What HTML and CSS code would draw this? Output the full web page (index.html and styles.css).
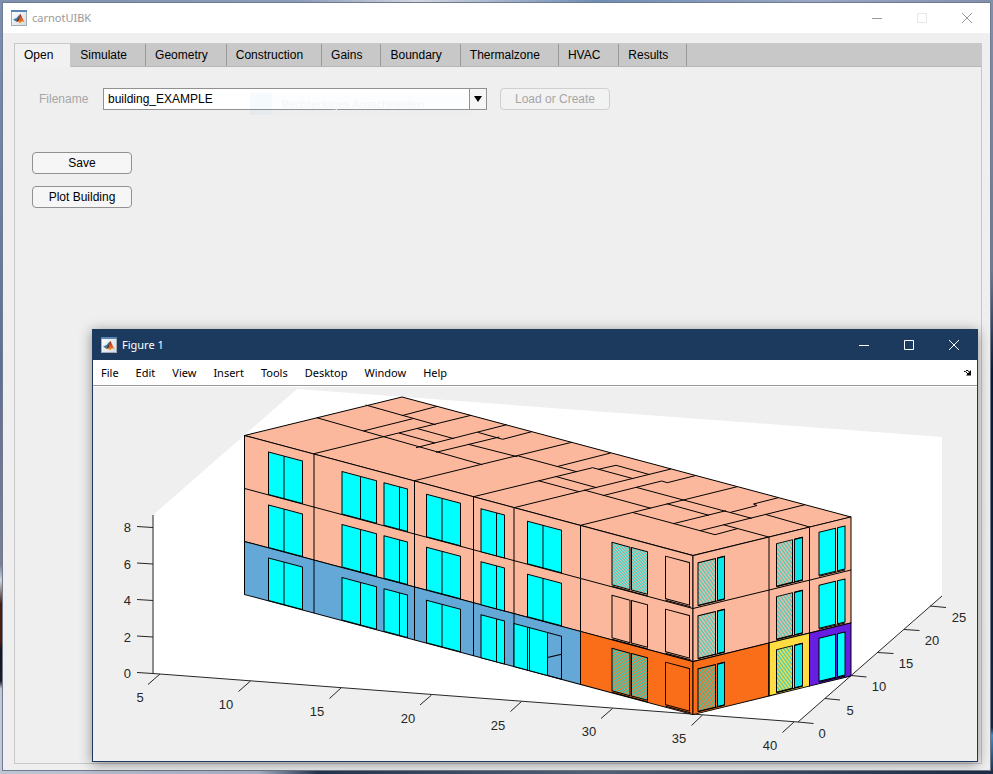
FILE: index.html
```
<!DOCTYPE html>
<html lang="en">
<head>
<meta charset="utf-8">
<title>carnotUIBK</title>
<link rel="stylesheet" href="styles.css">
</head>
<body>
<svg class="defs" aria-hidden="true">
  <defs>
    <linearGradient id="peak" x1="0" y1="0" x2="0" y2="1">
      <stop offset="0" stop-color="#8c2b14"/><stop offset=".5" stop-color="#e0551c"/><stop offset="1" stop-color="#f0a02c"/>
    </linearGradient>
    <linearGradient id="page" x1="0" y1="0" x2="1" y2="1">
      <stop offset="0" stop-color="#ffffff"/><stop offset="1" stop-color="#d3dae2"/>
    </linearGradient>
    <symbol id="matlab" viewBox="0 0 16 16">
      <rect x=".5" y=".5" width="15" height="15" fill="url(#page)" stroke="#a3adba"/>
      <rect x="0" y="0" width="16" height="2" fill="#5b86b3"/>
      <path d="M2 9.500 5.500 8 8.500 4.500 7.500 9 5 11.500Z" fill="#2f7fb5"/>
      <path d="M5 11.500 7.500 8 9 4C10 4 11.500 9 14 12.500 12 11 11 11 9 13.500 8 12 7 11.500 5 11.500Z" fill="url(#peak)"/>
      <path d="M5 11.500 7.500 8 8.500 4.500 8 10 6.500 11.500Z" fill="#5b2630"/>
    </symbol>
  </defs>
</svg>

<main class="window app">
  <header class="titlebar">
    <svg class="logo"><use href="#matlab"/></svg>
    <h1 class="title">carnotUIBK</h1>
    <div class="controls">
      <button type="button" aria-label="Minimize"><svg viewBox="0 0 10 10"><path d="M0 5.500H10"/></svg></button>
      <button type="button" aria-label="Maximize" disabled><svg viewBox="0 0 10 10"><path d="M.5.5h9v9h-9z"/></svg></button>
      <button type="button" aria-label="Close"><svg viewBox="0 0 10 10"><path d="M0 0 10 10M10 0 0 10"/></svg></button>
    </div>
  </header>
  <section class="panel">
    <nav class="tabs" role="tablist">
      <button type="button" role="tab" class="tab active" aria-selected="true">Open</button>
      <button type="button" role="tab" class="tab">Simulate</button>
      <button type="button" role="tab" class="tab">Geometry</button>
      <button type="button" role="tab" class="tab">Construction</button>
      <button type="button" role="tab" class="tab">Gains</button>
      <button type="button" role="tab" class="tab">Boundary</button>
      <button type="button" role="tab" class="tab">Thermalzone</button>
      <button type="button" role="tab" class="tab">HVAC</button>
      <button type="button" role="tab" class="tab">Results</button>
    </nav>
    <form class="form">
      <div class="file-row">
        <label for="filename">Filename</label>
        <div class="combo">
          <select id="filename"><option>building_EXAMPLE</option></select>
          <span class="arrow"></span>
          <div class="hint"><span class="hint-icon"></span>Rechteckiges Ausschneiden</div>
        </div>
        <button type="button" class="btn wide" disabled>Load or Create</button>
      </div>
      <div class="actions">
        <button type="button" class="btn">Save</button>
        <button type="button" class="btn">Plot Building</button>
      </div>
    </form>
  </section>
</main>

<section class="window figure">
  <header class="titlebar">
    <svg class="logo"><use href="#matlab"/></svg>
    <h2 class="title">Figure 1</h2>
    <div class="controls">
      <button type="button" aria-label="Minimize"><svg viewBox="0 0 10 10"><path d="M0 5.500H10"/></svg></button>
      <button type="button" aria-label="Maximize"><svg viewBox="0 0 10 10"><path d="M.5.5h9v9h-9z"/></svg></button>
      <button type="button" aria-label="Close"><svg viewBox="0 0 10 10"><path d="M0 0 10 10M10 0 0 10"/></svg></button>
    </div>
  </header>
  <nav class="menu">
    <button type="button">File</button>
    <button type="button">Edit</button>
    <button type="button">View</button>
    <button type="button">Insert</button>
    <button type="button">Tools</button>
    <button type="button">Desktop</button>
    <button type="button">Window</button>
    <button type="button">Help</button>
    <button type="button" class="dock" aria-label="Dock"><svg viewBox="0 0 8 6"><path d="M0 1.500h1.500l3 3M2 .5h2l2 2.500" fill="none" stroke="#000"/><path d="M7 0v5.500H2z"/></svg></button>
  </nav>
  <svg class="plot" viewBox="93 387 884 374" role="img" aria-label="3D building plot">
    <defs>
      <pattern id="hatch" width="4" height="2.500" patternUnits="userSpaceOnUse" patternTransform="rotate(58)">
        <rect width="4" height="1.100" fill="#2fd0c4"/>
      </pattern>
      <pattern id="hatch-dense" width="2.500" height="2.500" patternUnits="userSpaceOnUse" patternTransform="rotate(40)">
        <rect width="2.500" height="1.300" fill="#20dcd6"/>
      </pattern>
      <g id="front-windows" class="glass">
        <path d="M24 10h34v42.500h-34zM39.500 10v42.500"/>
        <path d="M97.500 10h34.500v42.500h-34.500zM116 10v42.500"/>
        <path d="M139.500 10h23.500v42.500h-23.500zM155 10v42.500"/>
        <path d="M182 10h34v42.500h-34zM197.500 10v42.500"/>
        <path d="M236.500 10h23.500v43h-23.500zM252 10v43"/>
      </g>
      <path id="front-f" class="glass" d="M283 10h34v42.500h-34zM298.500 10v42.500"/>
      <g id="front-g">
        <path d="M367.500 8.500h18v42.500h-18zM387 8.500h16v42.500h-16z"/>
        <path class="ledge" d="M367.500 52.500h36"/>
      </g>
      <g id="front-h" fill="none">
        <path d="M421 8h24v42.500h-24z"/>
        <path class="ledge" d="M421 52h25"/>
      </g>
      <g id="side-windows">
        <path d="M5 8.500h17.500v42.500h-17.500z" fill="url(#hatch)"/>
        <path class="glass" d="M24.500 8.500h7v42.500h-7z"/>
        <path class="veil" d="M24.500 8.500h7v42.500h-7z"/>
        <path d="M83.500 8.500h16v42.500h-16z" fill="url(#hatch)"/>
        <path class="glass" d="M101.500 8.500h8v42.500h-8z"/>
        <path class="veil" d="M101.500 8.500h8v42.500h-8z"/>
        <path class="glass" d="M126 7.500h16.500v43h-16.500zM144.500 7.500h7.500v43h-7.500z"/>
        <path class="ledge" d="M5 51.500h26.500M83.500 51.500h26M126 51.500h26" fill="none"/>
      </g>
    </defs>

    <path d="M297 389 942 437V597L797 722 153 674V515Z" fill="#fff"/>

    <g class="axes">
      <path class="z-axis" d="M153 515V674"/>
      <path d="M153 673.500 798 722 942 596"/>
      <path d="M137 526.500 153 527.500M137 563 153 564M137 599.500 153 600.500M137 636 153 637M137 672.500 153 673.500"/>
      <path d="M160 674 148 684.500M250.500 681 238.500 691.500M341 688 329.500 698.500M431.500 695 420 705M521.500 701.500 510.500 711.500M612.500 708.500 601 718.500M702.500 715 691.500 725.500M794 722 782.500 732.500"/>
      <path d="M798 722 813.500 723.500M825 698.500 840 700M851.500 675.500 866.500 677M877.500 652.500 893.500 653.500M904 629.500 919.500 630.500M930 606 946 607.500"/>
    </g>
    <g class="ticks end">
      <text x="131" y="532">8</text><text x="131" y="569">6</text><text x="131" y="605">4</text><text x="131" y="642">2</text><text x="131" y="678">0</text>
    </g>
    <g class="ticks">
      <text x="140" y="702">5</text><text x="226" y="709">10</text><text x="317" y="716">15</text><text x="408" y="723">20</text><text x="498" y="730">25</text><text x="589" y="736">30</text><text x="679" y="743">35</text><text x="770" y="750">40</text>
      <text x="822" y="738">0</text><text x="850" y="715">5</text><text x="879" y="691">10</text><text x="906" y="668">15</text><text x="932" y="645">20</text><text x="959" y="622">25</text>
    </g>

    <g class="lines">
      <path class="peach" d="M244.500 435.500 402 397 851 517 693 555.500Z"/>
      <g fill="none">
        <path d="M316.700 417.700 482.300 464.700M365.700 405 435.700 424.700M401.700 415.700 437.300 406.300M363.300 431 412.700 418.700M314 453.700 471 415.300M399 433 435 443M417.700 428.700 454 438.700M416 447.700 506.700 424.700M436 452.300 499.300 437M477.700 432.300 502.700 439.300 531.700 431.700M468.300 444.300 517.300 456.700M414.500 480.700 571.700 442.300"/>
        <path d="M517.300 455.700 576.700 471.700M556.700 466.700 610.700 453M473.500 496.700 592.700 467.700 633.300 478.700M598.300 469.300 616 465.300 650 474.700M555 476.300 596.700 487.700M538.300 480.700 579 491.700M514 507.700 671 469M584 490 651 508.300M602.700 495.700 661.700 481 667.300 482.700 695 475.700M580.500 525.300 737.300 486.700"/>
        <path d="M636 487.300 751.700 518.300M666.700 503.700 709 515.300M633.300 512.700 715 534.700 737.300 528.700M673.300 523.700 726 510.700M730 512.500 757 505.500 753.500 504 778.300 497.700M700 530.700 805 504.700M723.300 524.700 768.700 537M765 514.300 809.600 527"/>
      </g>

      <g transform="matrix(1 .2676 0 1 244.500 435.500)">
        <path class="peach" d="M0 0h448.500v106H0z"/>
        <path class="blue" d="M0 106h336v53H0z"/>
        <path class="orange" d="M336 106h112.500v53H336z"/>
        <path fill="none" d="M0 53h448.500M69.500 0v159M170 0v159M229 0v159M269.500 0v159M336 0v159"/>
        <use href="#front-windows"/><use href="#front-windows" y="53"/><use href="#front-windows" y="106"/>
        <use href="#front-f"/><use href="#front-f" y="53"/>
        <path fill="none" d="M303 116h14v43h-14zM303 141l14-7"/>
        <path class="glass" d="M269.500 116h33.500v43h-33.500zM283 116v43M285 116v43"/>
        <use href="#front-g" fill="url(#hatch-dense)"/><use href="#front-g" y="53" fill="none"/><use href="#front-g" y="106" fill="url(#hatch-dense)"/>
        <use href="#front-h"/><use href="#front-h" y="53"/><use href="#front-h" y="106"/>
      </g>

      <g transform="matrix(1 -.2437 0 1 693 555.500)">
        <path class="peach" d="M0 0h158v106H0z"/>
        <path class="orange" d="M0 106h76v53H0z"/>
        <path class="yellow" d="M76 106h40.500v53H76z"/>
        <path class="purple" d="M116.500 106h41.500v53h-41.500z"/>
        <path fill="none" d="M0 53h158M76 0v159M116.500 0v159"/>
        <use href="#side-windows"/><use href="#side-windows" y="53"/><use href="#side-windows" y="106"/>
      </g>
    </g>
  </svg>
</section>
</body>
</html>
```

FILE: styles.css
```
* { box-sizing: border-box; }

body {
  margin: 0;
  min-height: 100vh;
  position: relative;
  overflow: hidden;
  font: 12px/16px "Liberation Sans", Arial, sans-serif;
  color: #000;
  background:
    linear-gradient(90deg, #7f8fb0, #8b9bb9 30%, #d3d5df 42%, #6f8db5 60%, #9aa7c2 82%, #8490ab) top / 100% 3px no-repeat,
    linear-gradient(90deg, #c0c5d4, #aab2c6 26%, #24364e 32%, #56657a 60%, #1c2c44) bottom / 100% 4px no-repeat,
    linear-gradient(180deg, #8490ab, #6d7990 35%, #0b1a36 48%, #16263f 94%, #3d8fce 95%, #1c2c44) right / 3px 100% no-repeat,
    linear-gradient(180deg, #7f8fb0, #5f6f93 48%, #7d7f92 73%, #d0d4de 75%, #4a1c10 78%, #4a1c10 83%, #15131c 84%, #201c28 88%, #c4c8d6 89%) left / 3px 100% no-repeat,
    #24364e;
}

button, select { font: inherit; color: inherit; }

h1, h2 { margin: 0; font-weight: 400; }

.defs { position: absolute; width: 0; height: 0; }

/* Windows on the desktop */
.window { position: absolute; display: flex; flex-direction: column; background: #efefef; }
.app { inset: 2px 2px 3px 2px; border: 1px solid #6f7b8e; }
.figure {
  inset: 329px 15px 12px 92px;
  border: 1px solid #1c3a5e;
  border-top: 0;
  box-shadow: 0 2px 12px rgba(0, 0, 0, .42);
}

.titlebar {
  flex: none;
  display: flex;
  align-items: center;
  gap: 5px;
  height: 30px;
  padding: 0 1px 0 8px;
  background: #fff;
  color: #999;
}
.figure .titlebar { height: 31px; background: #1c3a5e; color: #fff; }
.logo { width: 16px; height: 16px; }
.title { flex: 1; font: 11px/16px "Noto Sans", "Open Sans", sans-serif; }

.controls { display: flex; }
.controls button {
  display: grid;
  place-items: center;
  width: 45px;
  height: 28px;
  padding: 0;
  border: 0;
  background: none;
}
.controls svg { width: 10px; height: 10px; overflow: visible; fill: none; stroke: currentColor; }
.controls button:disabled { color: #e6e6e6; }

/* Tabbed panel */
.panel { flex: 1; margin: 10px 8px 6px 11px; border: 1px solid #c8c8c8; }
.tabs { display: flex; height: 23px; background: #c8c8c8; border-bottom: 1px solid #b6b6b6; }
.tab {
  height: 22px;
  padding: 0 18px 0 9px;
  border: 0;
  border-right: 1px solid #999;
  background: none;
}
.tab.active { height: 23px; padding: 0 17px 1px 9px; border-right-color: #c8c8c8; background: #f1f1f1; }

.form { padding: 21px 17px; }
.file-row { display: flex; align-items: center; padding-left: 7px; color: #a6a6a6; }
.file-row label { width: 64px; }
.combo { position: relative; width: 384px; height: 22px; margin-right: 13px; color: #000; }
.combo select {
  appearance: none;
  display: block;
  width: 100%;
  height: 22px;
  padding: 0 22px 0 4px;
  border: 1px solid #919191;
  border-radius: 0;
  background: #fff;
}
.arrow {
  position: absolute;
  inset: 1px 1px 1px auto;
  width: 17px;
  display: grid;
  place-items: center;
  border-left: 1px solid #919191;
  background: #f6f6f6;
  pointer-events: none;
}
.arrow::before { content: ""; border: 4px solid transparent; border-top: 6px solid #000; border-bottom: 0; }
/* Fading tooltip */
.hint {
  position: absolute;
  left: 147px;
  top: 5px;
  display: flex;
  align-items: center;
  gap: 10px;
  width: 220px;
  height: 22px;
  font: 11px/16px "Noto Sans", "Open Sans", sans-serif;
  color: #f3f5f6;
  background: rgba(120, 190, 230, .03);
  pointer-events: none;
}
.hint-icon { width: 22px; height: 22px; background: rgba(60, 170, 230, .03); }

.btn {
  width: 100px;
  height: 22px;
  padding: 0;
  border: 1px solid #919191;
  border-radius: 4px;
  background: #f6f6f6;
}
.btn.wide { width: 110px; }
.btn:disabled { color: #a6a6a6; border-color: #cfcfcf; background: #f2f2f2; }
.actions { display: flex; flex-direction: column; gap: 12px; margin-top: 42px; }

/* Figure window */
.menu {
  flex: none;
  display: flex;
  gap: 17px;
  height: 26px;
  padding: 0 5px 0 8px;
  border-bottom: 1px solid #999;
  background: #fff;
}
.menu button { padding: 0; border: 0; background: none; font: 11px/16px "Noto Sans", "Open Sans", sans-serif; }
.menu .dock { margin-left: auto; }
.dock svg { display: block; width: 8px; height: 6px; }

.plot { flex: 1; min-height: 0; width: 100%; border-top: 1px solid #fff; }
.axes { fill: none; stroke: #262626; stroke-width: 1; }
.z-axis { stroke: #8c8c8c; stroke-width: 2; }
.ticks { font: 13px "Liberation Sans", Arial, sans-serif; fill: #262626; text-anchor: middle; }
.ticks.end { text-anchor: end; }
.lines { stroke: #000; stroke-width: 1; stroke-linejoin: round; }
.peach { fill: #fcb89c; }
.blue { fill: #64a8d8; }
.orange { fill: #fa6e1a; }
.yellow { fill: #ffdc42; }
.purple { fill: #661ee0; }
.glass { fill: #00ffff; }
.veil { fill: #2a9aa4; fill-opacity: .25; }
.ledge { fill: none; }
```
